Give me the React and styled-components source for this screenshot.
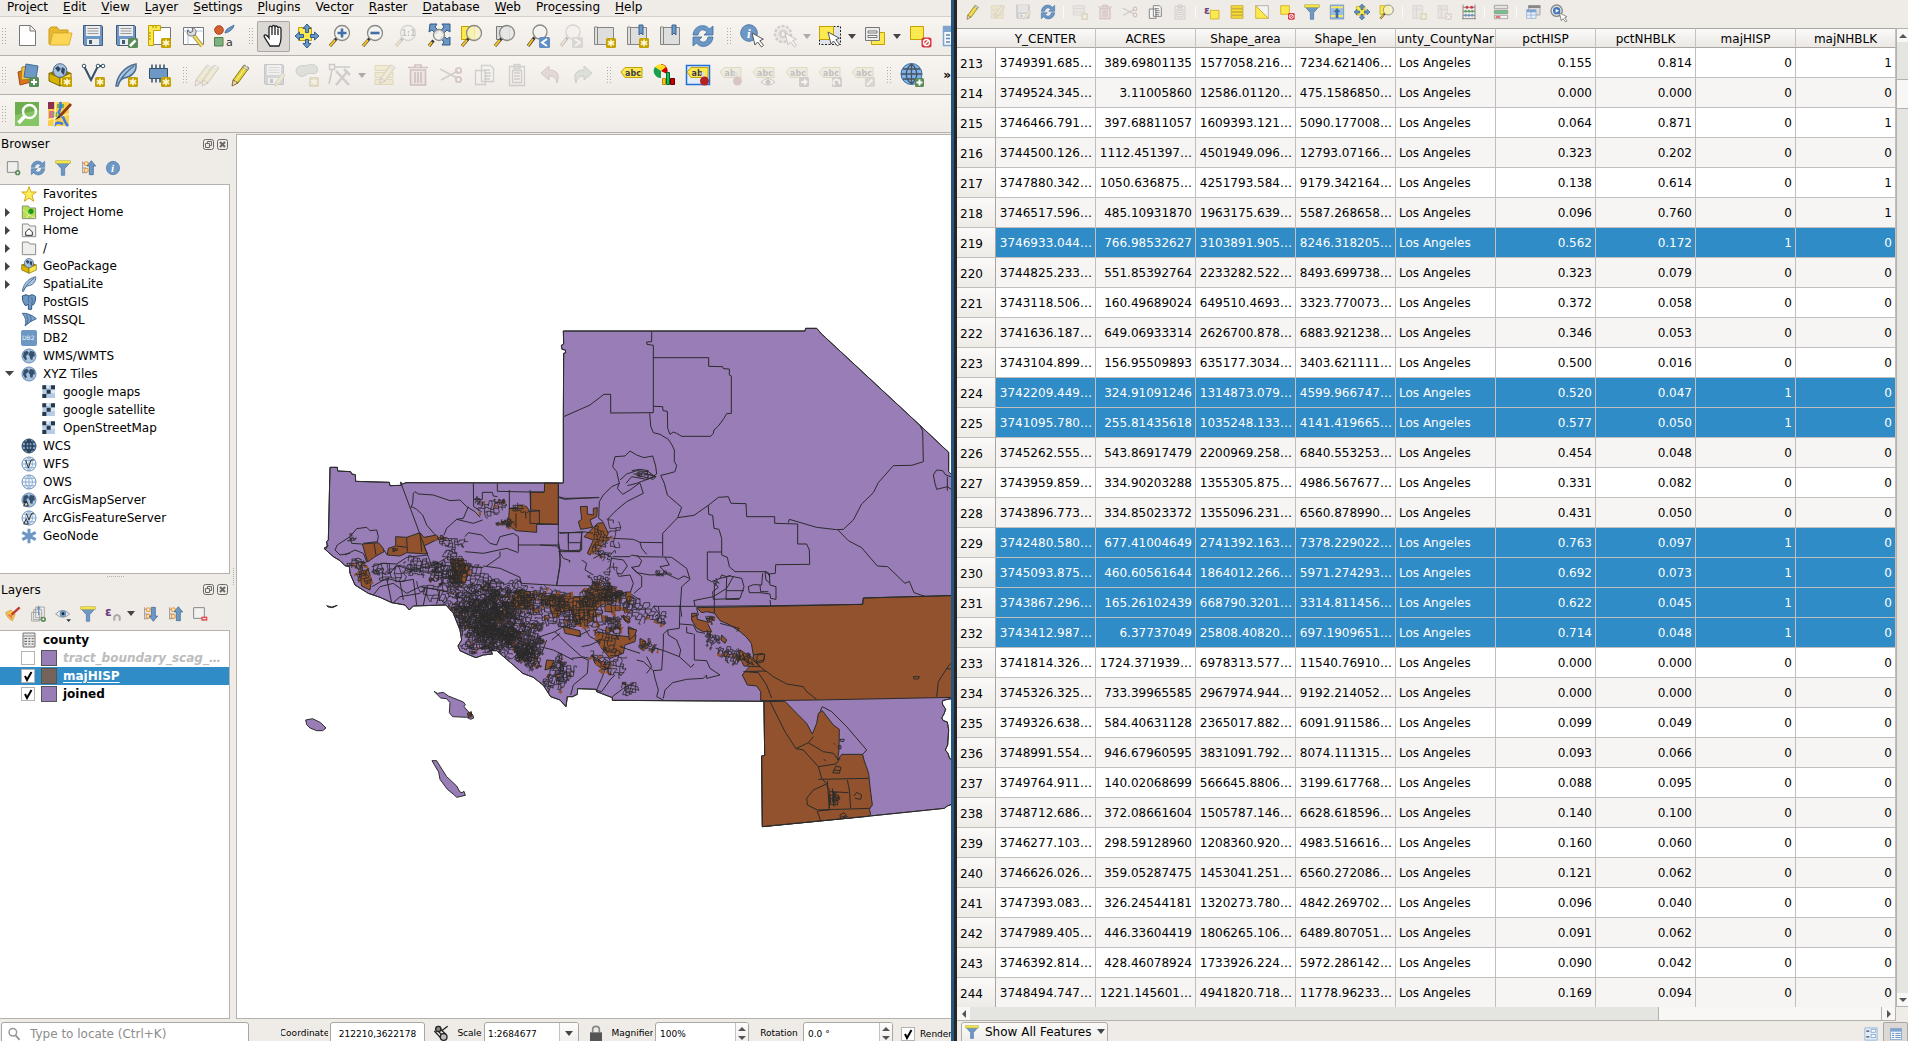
import React from "react";
import styled, { createGlobalStyle, css } from "styled-components";

/* ---------- theme values ---------- */
const c = {
  panel: "#efebe7",
  line: "#b5b2ae",
  grid: "#c0bfbd",
  select: "#308cc6",
  purple: "#987db7",
  brown: "#91522d",
  ink: "#2b2b2b",
  blue: "#6d97c4",
  blueDark: "#415a75",
  yellow: "#fce94f",
  gold: "#c4a000",
  green: "#5a8c5a",
  red: "#d9363e",
};

const Global = createGlobalStyle`
  *, *::before, *::after { box-sizing: border-box; }
  body { margin: 0; background: ${c.panel}; overflow: hidden; }
  body, button, input, select, table {
    font-family: "DejaVu Sans", Verdana, sans-serif;
    font-size: 12px;
    color: #000;
  }
  button { margin: 0; padding: 0; border: 0; background: none; }
`;

/* ---------- window frames ---------- */
const Desktop = styled.div`
  display: flex;
  height: 100vh;
  overflow: hidden;
`;
const MainWindow = styled.main`
  flex: 1 1 0;
  min-width: 0;
  display: flex;
  flex-direction: column;
  overflow: hidden;
  background: ${c.panel};
  border-right: 3px solid #27557c;
`;
const TableWindow = styled.section`
  flex: 1 1 0;
  min-width: 0;
  display: flex;
  flex-direction: column;
  overflow: hidden;
  background: ${c.panel};
  border-left: 3px solid #242628;
`;

/* ---------- menu and toolbars ---------- */
const MenuBar = styled.nav`
  flex: none;
  display: flex;
  gap: 1px;
  height: 17px;
  border-bottom: 1px solid #d3d0cc;
`;
const MenuItem = styled.button`
  height: 14px;
  padding: 0 7px;
  line-height: 14px;
  white-space: nowrap;
  u { text-underline-offset: 2px; }
`;
const Toolbar = styled.div`
  flex: none;
  display: flex;
  align-items: center;
  height: ${(p) => p.$height || 39}px;
  overflow: hidden;
  border-bottom: 1px solid ${c.line};
  background: linear-gradient(#f8f5f1, #efebe7);
`;
const Handle = styled.span`
  flex: none;
  width: 10px;
  height: 18px;
  margin-left: ${(p) => (p.$first ? 0 : 6)}px;
  background: radial-gradient(circle, #aeaba7 0 1px, transparent 1px) 1px 0 / 3px 3px repeat-y,
    radial-gradient(circle, #aeaba7 0 1px, transparent 1px) 4px 0 / 3px 3px repeat-y;
`;
const ToolButton = styled.button`
  flex: none;
  display: grid;
  place-items: center;
  width: 33px;
  height: 31px;
  border-radius: 2px;
  ${(p) => p.$pressed && css`
    background: #dcd8d5;
    box-shadow: inset 0 0 0 1px #aaa6a2;
  `}
  svg { overflow: visible; }
  &:disabled svg { opacity: 0.28; filter: grayscale(0.5); }
`;
const SmallButton = styled(ToolButton)`
  width: 25px;
  height: 24px;
`;
const ArrowButton = styled.button`
  flex: none;
  display: grid;
  place-items: center;
  width: 12px;
  height: 24px;
  &:disabled { opacity: 0.4; }
`;
const Overflow = styled.span`
  margin-left: auto;
  font-weight: bold;
`;
const Down = styled.i`
  border: 4px solid transparent;
  border-top: 5px solid #444;
  border-bottom: 0;
`;

/* ---------- docks ---------- */
const Body = styled.div`
  flex: 1;
  min-height: 0;
  display: flex;
`;
const Sidebar = styled.aside`
  flex: none;
  width: 230px;
  display: flex;
  flex-direction: column;
`;
const Dock = styled.section`
  flex: 1 1 0;
  min-height: 0;
  display: flex;
  flex-direction: column;
`;
const DockTitle = styled.header`
  flex: none;
  display: flex;
  align-items: center;
  gap: 3px;
  height: 22px;
  padding: 0 2px 0 1px;
  h2 { flex: 1; margin: 0; font-size: 12px; font-weight: normal; }
`;
const DockButton = styled.button`
  width: 11px;
  height: 11px;
  svg { display: block; }
`;
const DockTools = styled.div`
  flex: none;
  display: flex;
  height: 26px;
  margin-bottom: 3px;
  align-items: center;
`;
const Tree = styled.ul`
  flex: 1;
  min-height: 0;
  margin: 0;
  padding: 0;
  list-style: none;
  overflow: hidden;
  background: #fff;
  border: 1px solid ${c.line};
  border-left: 0;
`;
const TreeRow = styled.li`
  display: flex;
  align-items: center;
  gap: 6px;
  height: 18px;
  padding-left: ${(p) => (p.$child ? 41 : 5)}px;
  white-space: nowrap;
  ${(p) => p.$selected && css`background: ${c.select}; color: #fff;`}
  svg { display: block; }
`;
const Twist = styled.span`
  flex: none;
  width: 10px;
`;
const LayerName = styled.span`
  padding-top: 1px;
  font-weight: bold;
  ${(p) => p.$off && css`font-style: italic; color: #bcbcbc;`}
  ${(p) => p.$selected && css`text-decoration: underline; text-underline-offset: 2px;`}
`;
const NodeName = styled.span`
  padding-top: 0;
`;
const Swatch = styled.i`
  flex: none;
  width: 16px;
  height: 16px;
  background: ${(p) => p.$color};
  border: 1px solid #555;
`;
const Check = styled.input.attrs({ type: "checkbox" })`
  appearance: none;
  flex: none;
  width: 14px;
  height: 14px;
  margin: 0;
  background: #fff;
  border: 1px solid #b6b3ae;
  &:checked {
    background: #fff url("data:image/svg+xml;utf8,<svg xmlns='http://www.w3.org/2000/svg' viewBox='0 0 12 12'><path d='M3 6l2 4 4.500-8' fill='none' stroke='black' stroke-width='2'/></svg>");
  }
`;
const SplitH = styled.div`
  flex: none;
  height: 5px;
  display: grid;
  place-items: center;
  &::after { content: ""; width: 17px; border-top: 1px dotted #b5b2ae; }
`;
const SplitV = styled.div`
  flex: none;
  width: 6px;
  display: grid;
  place-items: center;
  &::after { content: ""; height: 17px; border-left: 1px dotted #b5b2ae; }
`;
const Canvas = styled.div`
  flex: 1;
  min-width: 0;
  margin-top: 1px;
  background: #fff;
  border: 1px solid ${c.line};
  border-right: 0;
  overflow: hidden;
  svg { display: block; width: 100%; height: 100%; }
`;

/* ---------- status bar ---------- */
const StatusBar = styled.footer`
  flex: none;
  display: flex;
  align-items: flex-start;
  height: 22px;
  padding: 3px 0 0 1px;
  overflow: hidden;
  white-space: nowrap;
`;
const Field = styled.div`
  flex: none;
  display: flex;
  align-items: center;
  width: ${(p) => p.$width}px;
  height: 23px;
  margin-right: ${(p) => p.$after || 0}px;
  background: #fff;
  border: 1px solid #aaa7a3;
  border-radius: 3px;
  overflow: hidden;
`;
const FieldInput = styled.input`
  flex: 1;
  min-width: 0;
  height: 20px;
  padding: 0 4px;
  border: 0;
  outline: 0;
  background: none;
  font-size: ${(p) => (p.$large ? 12 : 9)}px;
  text-align: ${(p) => (p.$center ? "center" : "left")};
  &::placeholder { color: #8c8c8c; opacity: 1; }
`;
const Picker = styled.select`
  flex: 1;
  min-width: 0;
  height: 20px;
  padding: 0 3px;
  border: 0;
  appearance: none;
  background: none;
  font-size: 9px;
`;
const FieldSide = styled.span`
  flex: none;
  display: flex;
  flex-direction: column;
  align-items: center;
  justify-content: center;
  gap: 5px;
  width: ${(p) => p.$width}px;
  height: 22px;
  border-left: 1px solid #c4c1bd;
  background: linear-gradient(#fdfdfc, #efedea);
`;
const SpinButton = styled.button`
  display: block;
  height: 4px;
  border: 4px solid transparent;
  ${(p) => (p.$up ? css`border-bottom-color: #555; border-top: 0;` : css`border-top-color: #555; border-bottom: 0;`)}
`;
const Caption = styled.label`
  flex: none;
  display: flex;
  justify-content: center;
  width: ${(p) => p.$width}px;
  margin-right: 2px;
  overflow: hidden;
  font-size: 9px;
  line-height: 22px;
`;
const StatusIcon = styled.button`
  flex: none;
  display: grid;
  place-items: center;
  width: ${(p) => p.$width}px;
  height: 21px;
`;
const RenderToggle = styled.span`
  flex: none;
  display: flex;
  align-items: center;
  gap: 5px;
  height: 23px;
  label { font-size: 9px; }
`;

/* ---------- attribute table ---------- */
const TableTools = styled.div`
  flex: none;
  display: flex;
  align-items: center;
  height: 28px;
  padding: 0 0 4px 3px;
`;
const Divider = styled.i`
  flex: none;
  width: 1px;
  height: 12px;
  margin: 0 3px;
  background: #fbfaf9;
`;
const TableArea = styled.div`
  flex: 1;
  min-height: 0;
  display: flex;
`;
const TableScroll = styled.div`
  flex: 1;
  min-width: 0;
  display: flex;
  flex-direction: column;
`;
const TableClip = styled.div`
  flex: 1;
  min-height: 0;
  overflow: hidden;
`;
const Grid = styled.table`
  width: 100%;
  table-layout: fixed;
  border-collapse: separate;
  border-spacing: 0;
`;
const HeadCell = styled.th`
  width: ${(p) => (p.$corner ? "39px" : "auto")};
  height: 20px;
  padding: 2px 1px 0;
  border: solid #a9a6a2;
  border-width: 1px 0;
  border-right: ${(p) => (p.$corner ? "0" : "1px solid #c6c3bf")};
  background: linear-gradient(#fbfaf9, #ebe8e4);
  font-weight: normal;
  line-height: 16px;
  white-space: nowrap;
`;
const RowHead = styled.th`
  height: 30px;
  padding: 2px 3px 0;
  border-right: 1px solid #a9a6a2;
  border-bottom: 1px solid ${c.grid};
  background: linear-gradient(#fbfaf9, #eeebe7);
  font-weight: normal;
  text-align: left;
`;
const Cell = styled.td`
  height: 30px;
  padding: 0 3px;
  border-right: 1px solid ${c.grid};
  border-bottom: 1px solid ${c.grid};
  text-align: ${(p) => (p.$text ? "left" : "right")};
  white-space: nowrap;
  overflow: hidden;
`;
const Row = styled.tr`
  td { background: ${(p) => (p.$selected ? c.select : p.$alt ? "#f6f5f4" : "#fff")}; }
  ${(p) => p.$selected && css`td { color: #fff; }`}
`;
const VBar = styled.div`
  flex: none;
  width: 12px;
  display: flex;
  flex-direction: column;
  margin-bottom: 14px;
  border: 1px solid ${c.line};
  border-right: 0;
  background: #e4e4e0;
`;
const HBar = styled.div`
  flex: none;
  display: flex;
  height: 14px;
  border-bottom: 1px solid ${c.line};
  border-right: 1px solid ${c.line};
  background: #e4e4e0;
`;
const BarButton = styled.button`
  flex: none;
  display: grid;
  place-items: center;
  width: ${(p) => (p.$wide ? "100%" : "13px")};
  height: 13px;
  background: #f8f7f6;
`;
const Gap = styled.i`
  flex: ${(p) => p.$share} 1 0;
`;
const Thumb = styled.i`
  flex: ${(p) => p.$share} 1 0;
  border: solid ${c.line};
  border-width: ${(p) => (p.$across ? "0 1px" : "1px 0")};
  background: #f8f7f6;
`;
const TableFoot = styled.footer`
  flex: none;
  display: flex;
  justify-content: space-between;
  height: 20px;
  padding: 1px 0 0 4px;
  overflow: hidden;
`;
const FilterButton = styled.button`
  display: flex;
  align-items: center;
  gap: 6px;
  height: 22px;
  padding: 0 2px 3px 3px;
  border: 1px solid #b0ada9;
  border-radius: 3px;
  background: linear-gradient(#fbfaf9, #efedea);
`;
const FootViews = styled.div`
  display: flex;
`;

/* ---------- icons ---------- */
const Badge = ({ x = 14, y = 14, s = 10, fill = c.gold, children }) => (
  <g>
    <rect x={x} y={y} width={s} height={s} rx="1.500" fill={fill} />
    {children || (
      <path
        d={`M${x + s / 2} ${y + 1.5}v${s - 3}M${x + 1.8} ${y + 3.2}l${s - 3.6} ${s - 6.4}M${x + 1.8} ${y + s - 3.2}l${s - 3.6} ${6.4 - s}`}
        stroke="#fff8d0" strokeWidth="1.600"
      />
    )}
  </g>
);
const Lens = ({ cx = 14, cy = 9, r = 7.5, fill = "#f3f3ee" }) => (
  <g>
    <path d={`M${cx - 5.5} ${cy + 5.5}L2 22`} stroke="#333" strokeWidth="3" />
    <path d={`M${cx - 7} ${cy + 7}L2 22`} stroke="#f5c328" strokeWidth="2" />
    <circle cx={cx} cy={cy} r={r} fill={fill} fillOpacity=".85" stroke="#8a8a86" strokeWidth="1.300" />
  </g>
);
const Pointer = ({ x = 12, y = 9 }) => (
  <path transform={`translate(${x} ${y})`} d="M0 0l3 12 2.500-3 4 5 2-1.700-3.700-4.600 3.500-1.500z" fill="#fff" stroke="#555" />
);
const Disk = () => (
  <g>
    <path d="M2.500 1.500h18l1 1v19h-18l-1-1z" fill={c.blue} stroke={c.blueDark} />
    <path d="M5 2h14v10H5z" fill="#eee" />
    <path d="M6.500 4.500h11M6.500 7h11M6.500 9.500h11" stroke="#999" />
    <path d="M6 15h12v6H6z" fill="#ececec" />
    <path d="M8 16h3v4H8z" fill={c.blueDark} />
  </g>
);
const Pencil = ({ t }) => (
  <g transform={t}>
    <path d="M4 17L15 2l5 3L9 20z" fill="#e5d23a" stroke="#8a7a20" />
    <path d="M15 2l5 3-1.500 2.200-5-3z" fill="#d0d0cc" stroke="#777" strokeWidth=".7" />
    <path d="M4 17l5 3-6 3z" fill="#eed8a8" stroke="#66511c" strokeWidth=".8" />
    <path d="M6.500 18.500L17.500 3.500" stroke="#fff5a0" />
  </g>
);
const Globe = ({ dark, grid }) => (
  <g>
    <circle cx="12" cy="12" r="10.500" fill={grid ? (dark ? "#7ba2cd" : "#f2f6fa") : "#a9c3df"} stroke={dark ? "#36506c" : "#6a8cb0"} strokeWidth="1.500" />
    {grid ? (
      <path d="M12 2v20M2 12h20M4 6.500h16M4 17.500h16M12 2c-7 6-7 14 0 20M12 2c7 6 7 14 0 20" fill="none" stroke={dark ? "#2f4358" : "#85abd4"} strokeWidth={dark ? 2.2 : 1.4} />
    ) : (
      <path d="M4 6l5-2 3 3-3 4-2 1 2 4-2 3-4-6zM14 4l6 2 1 6-3 1-1 5-3-1-1-5-2-2z" fill="#34516f" />
    )}
  </g>
);
const Box = () => (
  <g>
    <path d="M1 10l11 5v8L1 18z" fill="#d7b300" stroke="#7d6600" />
    <path d="M23 10l-11 5v8l11-5z" fill="#fbe54b" stroke="#7d6600" />
    <path d="M1 10l11-5 11 5-11 5z" fill="#8d7400" />
    <circle cx="12" cy="7.500" r="6.800" fill="#a9c3df" stroke="#4d6c8d" />
    <path d="M7 5l3-2 3 3-3 3zM14 4l3 2-1 6-3-3z" fill="#2e4864" />
  </g>
);
const Feather = () => (
  <path d="M2 23C3 14 9 4 22 1c1 8-5 13-12 14-3 1-5 4-6 8zM4 21C8 14 13 8 20 3" fill="#a9c6e3" stroke="#4d6f92" strokeWidth="1.500" />
);
const Tag = ({ children, pale, short }) => (
  <g>
    <path d="M1 9L5 4.500h17v10H5z" fill={pale ? "#e0dca8" : "#fce94f"} stroke={c.gold} />
    <text x={short ? 5.5 : 5} y="12.500" fontSize="8" fontWeight="bold" fill="#3c3c50">{short ? "ab" : "abc"}</text>
    {children}
  </g>
);
const Sheet = () => <path d="M3.500 3.500h20v17h-20z" fill="#fff" stroke="#777" />;
const Bars = ({ n = 4 }) => (
  <path d={n === 4 ? "M3 2.500h18v4H3zM3 7.500h18v4H3zM3 12.500h18v4H3zM3 17.500h18v4H3z" : "M2 2.500h18v5H2zM2 9.500h18v5H2zM2 16.500h18v5H2z"} fill="#f6dd3c" stroke="#bd9a10" />
);
const Funnel = () => (
  <g>
    <path d="M1.500 4h21l-8 9v10h-5V13z" fill={c.blue} stroke="#4a76a8" />
    <path d="M1 1h22v4H1z" fill="#fce94f" stroke="#b5b040" />
  </g>
);
const Tiles = () => (
  <g>
    <path d="M2 2h19v19H2z" fill="#b5cce4" />
    <path d="M2 2h6v6H2zM15 2h6v6h-6zM8.500 8.500h6v6h-6zM2 15h6v6H2z" fill="#27394d" />
    <path d="M8 2h4v4H8zM15 9h6v5h-6z" fill="#dbe7f3" />
  </g>
);
const Book = () => (
  <path d="M2.500 3h3v17.500h-3zM5.500 3.500h16v17h-16z" fill="#dedede" stroke="#858582" />
);
const Ribbon = () => <path d="M14 1h4v10l-2-2-2 2z" fill={c.blue} stroke="#36648f" />;
const Folder = ({ fill = "#efefed", children }) => (
  <g>
    <path d="M2 3h9l2 3h9v16H2z" fill={fill} stroke="#8c8c88" strokeWidth="1.500" />
    {children}
  </g>
);
const TreeArrow = ({ up }) => (
  <g>
    <path d="M4 2v18M4 5h6M4 12h6M4 19h6" fill="none" stroke="#999" strokeWidth="1.500" />
    <path d="M7 3h5v5H7zM7 13h5v5H7z" fill="#fff2d8" stroke="#f0932c" strokeWidth="1.500" />
    <path transform={up ? "" : "matrix(1 0 0 -1 0 24)"} d="M17 1l6.500 8H20v13h-6V9h-3.500z" fill={c.blue} stroke="#345f8c" />
  </g>
);
const Trash = () => (
  <g fill="none" stroke="#a33b3b" strokeWidth="1.600">
    <path d="M4.500 7h15v15h-15z" fill="#edc6c6" />
    <path d="M9 9v11M12 9v11M15 9v11M2 4.500h20M9 4V2h6v2" />
  </g>
);
const Scissors = () => (
  <g fill="none" stroke="#777" strokeWidth="1.800">
    <path d="M1 6l17 9M2 17l17-9" />
    <circle cx="19.500" cy="16.500" r="2.700" stroke="#a55" />
    <circle cx="19.500" cy="7.500" r="2.700" stroke="#a55" />
  </g>
);
const Copy = () => (
  <path d="M3.500 7.500h10v14h-10zM9.500 2.500h9l3 3v13h-12zM12 7h6M12 10h7M12 13h7M12 16h6" fill="#f6f6f6" stroke="#777" strokeWidth="1.300" />
);
const Paste = () => (
  <path d="M4.500 3.500h15v19h-15zM9 1.500h6v4H9zM7.500 7.500h9v12h-9zM9 10h6M9 13h6M9 16h6" fill="#eee" stroke="#777" strokeWidth="1.300" />
);
const Cycle = () => (
  <g fill={c.blue} stroke="#3b6ea5" strokeWidth=".8">
    <path d="M2 11C3 1 14-1 18.500 5L22 2v9h-9l3-3C12 4 8 6 7 11z" />
    <path d="M22 13c-1 10-12 12-16.500 6L2 22v-9h9l-3 3c4 4 8 2 9-3z" />
  </g>
);
const NoEntry = ({ x = 18.5, y = 18.5 }) => (
  <g>
    <rect x={x - 5} y={y - 5} width="10" height="10" rx="2" fill={c.red} />
    <circle cx={x} cy={y} r="3" fill="none" stroke="#fff" strokeWidth="1.400" />
    <path d={`M${x - 2} ${y + 2}l4-4`} stroke="#fff" strokeWidth="1.400" />
  </g>
);
const Arrows4 = () => (
  <path d="M12 0l4 4.500h-2.500v4h-3v-4H8zM12 24l4-4.500h-2.500v-4h-3v4H8zM0 12l4.500-4v2.500h4v3h-4V16zM24 12l-4.500-4v2.500h-4v3h4V16z" fill={c.blue} stroke="#2f5b88" />
);
const Stack = () => (
  <g>
    <path d="M8.500 1.500h13v16h-13zM5.500 5.500h12v15h-12zM2.500 9.500h12v13h-12z" fill="#eeeeea" fillOpacity=".7" stroke="#888" />
    <path d="M13 2v12M11 4l2-3 2 3" stroke={c.blue} strokeWidth="2" fill="none" />
  </g>
);
const Form = () => (
  <g>
    <path d="M8.500 8.500h13v12h-13z" fill={c.yellow} stroke={c.gold} />
    <path d="M2.500 3.500h14v13h-14z" fill="#ececec" stroke="#777" />
    <path d="M5 7h9v2H5zM5 11.500h9v2H5z" fill="#fff" stroke="#777" />
  </g>
);
const TableGlyph = () => (
  <g>
    <path d="M2.500 2.500h19v19h-19z" fill="#f4f8fc" stroke="#7fa5cf" strokeWidth="1.500" />
    <path d="M3 3h18v5H3z" fill="#7fa5cf" />
    <path d="M5 11h4M11 11h9M5 14.500h4M11 14.500h9M5 18h4M11 18h9" stroke="#5b86b5" strokeWidth="1.500" />
  </g>
);

const icons = {
  new: <path d="M4.500 1.500h11l5 5v15h-16zM15 2v5h5" fill="#fff" stroke="#777" />,
  open: <g><path d="M1 5l2-2h6l2 3h9v3H5L3 20H1z" fill="#e8b830" stroke="#c99b1c" /><path d="M5 9h19l-3 12H2z" fill="#fcd757" stroke="#e0b030" /></g>,
  save: <Disk />,
  saveas: <g><Disk /><Badge fill={c.green}><path d="M16 22l5.500-5.500" stroke="#fff" strokeWidth="2.500" /></Badge></g>,
  layout: <g><Sheet /><path d="M1.500 1.500h12v5h-7v15h-5z" fill={c.yellow} stroke={c.gold} /><path d="M6 2v2M9 2v2M2 9h2M2 12h2M2 15h2" stroke="#a58a00" /><Badge /></g>,
  manager: <g><Sheet /><path d="M3.500 7h19M8 3.500v17" stroke="#a8c0e8" /><path d="M14 12l8 10" stroke="#b49a3a" strokeWidth="4" /><path d="M14 12l8 10" stroke="#f5e27a" strokeWidth="2" /><path d="M8 6l2 3 3-2-1-3c4 0 5 4 3 7-3 2-7 1-8-2z" fill="#ddd" stroke="#666" /></g>,
  style: <g><circle cx="6" cy="6" r="4.300" fill="#d5602f" stroke="#a8441c" /><path d="M12 9c1-5 5-5 9-8-1 5-5 7-9 8z" fill={c.blue} stroke="#476f9c" /><path d="M1.500 13.500h8.500v8.500H1.500z" fill="#7fb07f" stroke="#4d804d" /><text x="13" y="21.500" fontSize="11" fill="#333">a</text></g>,
  hand: <path d="M8 22C6 18 3 15 2 12c1-2 3-1 5 2V4c0-2.500 3-2.500 3 0 0-3.500 3-3.500 3 0 0-3 3-2.500 3 .500 0-2 3-2 3 .5v9c0 4-1 6-2 8zM10 4v7M13 4v7M16 5v6" fill="#fff" stroke="#222" strokeWidth="1.300" />,
  panSel: <g><path d="M3.500 3.500h13v13h-13z" fill={c.yellow} stroke={c.gold} /><Arrows4 /></g>,
  zoomIn: <g><Lens /><path d="M14 4.500v9M9.500 9h9" stroke="#3f6fa6" strokeWidth="2.600" /></g>,
  zoomOut: <g><Lens /><path d="M9.500 9h9" stroke="#3f6fa6" strokeWidth="2.600" /></g>,
  native: <g><Lens /><text x="7.500" y="12" fontSize="8" fontWeight="bold" fill="#555">1:1</text></g>,
  zoomFull: <g><path d="M3 0h7L8 3l4 4-3 3-4-4-3 2zM23 0v8l-3-2-4 4-3-3 4-4-2-3zM23 21h-8l2-3-4-4 3-3 4 4 3-2z" fill={c.blue} stroke="#2f5b88" /><Lens cx={12} cy={11} r={5.5} /></g>,
  zoomSel: <g><path d="M1.500 2.500h13v13h-13z" fill={c.yellow} stroke={c.gold} /><Lens fill="#f6f2c6" /></g>,
  zoomLayer: <g><path d="M3.500 2.500h13v13h-13z" fill="#ddd" stroke="#777" /><Lens fill="#e8e8e6" /></g>,
  zoomLast: <g><Lens cx={14} cy={8} r={7} /><Badge x={13} y={13} s={11} fill="#5f8fc4"><path d="M21 15l-5 3.500 5 3.500" fill="none" stroke="#fff" strokeWidth="2" /></Badge></g>,
  zoomNext: <g><Lens cx={14} cy={8} r={7} /><Badge x={13} y={13} s={11} fill="#999"><path d="M16 15l5 3.500-5 3.500" fill="none" stroke="#fff" strokeWidth="2" /></Badge></g>,
  view: <g><Book /><Badge /></g>,
  bookmarkNew: <g><Book /><Ribbon /><Badge /></g>,
  bookmark: <g><Book /><Ribbon /></g>,
  refresh: <Cycle />,
  identify: <g><circle cx="9" cy="9" r="8.300" fill={c.blue} stroke="#4c7aab" /><text x="7" y="14" fontSize="13" fontStyle="italic" fontFamily="Liberation Serif" fontWeight="bold" fill="#fff">i</text><Pointer /></g>,
  action: <g><circle cx="10" cy="10" r="8" fill="#ddd" stroke="#777" strokeWidth="2.500" strokeDasharray="3 1.500" /><circle cx="10" cy="10" r="4.500" fill="#8a8a8a" /><path d="M9 7.500l4 2.500-4 2.500z" fill="#fff" /><Pointer /></g>,
  select: <g><path d="M1.500 2.500h21v18h-21z" fill="#dfe3ea" stroke="#222" strokeDasharray="2 1.500" /><path d="M1.500 2.500h14v13h-14z" fill={c.yellow} stroke={c.gold} /><Pointer x={10} y={8} /></g>,
  form: <Form />,
  deselect: <g><path d="M2.500 2.500h13v13h-13z" fill={c.yellow} stroke={c.gold} /><NoEntry /></g>,
  table: <TableGlyph />,
  dsm: <g><path d="M3 9l10-3 3 13-11 3z" fill="#e0721f" stroke="#a04a10" /><path d="M7 4l10-1 1 13-12 1z" fill="#f0c43c" stroke="#a68116" /><path d="M11 1l12 2-2 13-12-2z" fill={c.blue} stroke="#426b98" /><Badge fill={c.green}><path d="M19 16v6M16 19h6" stroke="#fff" strokeWidth="2" /></Badge></g>,
  gpkg: <g><Box /><Badge /></g>,
  gpkgPlain: <Box />,
  shp: <g><path d="M3 3l7 14L17 3h5" fill="none" stroke="#35506b" strokeWidth="2" /><g fill="#fff" stroke="#35506b"><circle cx="3" cy="3" r="1.800" /><circle cx="17" cy="3" r="1.800" /><circle cx="22" cy="3" r="1.800" /></g><Badge /></g>,
  feather: <g><Feather /><Badge /></g>,
  featherPlain: <Feather />,
  memory: <g><path d="M5 1.500v18M9 1.500v18M13 1.500v18M17 1.500v18" stroke="#35506b" strokeWidth="1.500" /><path d="M2.500 5.500h18v10h-18z" fill={c.blue} stroke="#35506b" /><Badge /></g>,
  edits: <g><Pencil t="translate(-4 0)" /><Pencil t="translate(3 0)" /></g>,
  pencil: <Pencil />,
  saveEdits: <g><Disk /><Pencil t="translate(11 9) scale(.62)" /></g>,
  addFeature: <g><path d="M1 8C2 0 9 4 13 2c7-2 11 2 9 7-3 4-7-1-11 3-5 3-9 1-10-4z" fill="#9fb89f" stroke="#667" /><Badge /></g>,
  vertex: <g><path d="M1.500 1.500h5v5h-5zM7 4h15M4 7L1 21" fill="none" stroke="#666" strokeWidth="1.500" /><path d="M8 8l13 14M8 22L19 9M16 6l6 6" stroke="#777" strokeWidth="2.500" /></g>,
  modify: <g><Bars n={3} /><Pencil t="translate(4 0) scale(.9)" /></g>,
  trash: <Trash />, cut: <Scissors />, copy: <Copy />, paste: <Paste />,
  undo: <path d="M3 10l8-7v4c8 0 11 4 8 13-1-5-3-7-8-7v4z" fill="#c99" stroke="#955" />,
  redo: <path d="M21 10l-8-7v4C5 7 2 11 5 20c1-5 3-7 8-7v4z" fill="#9b9" stroke="#575" />,
  tag: <Tag />,
  diagram: <g><path d="M8 8V1a7 7 0 0 1 6 10z" fill="#c00" /><path d="M8 8L2 4a7 7 0 0 1 11 0z" fill="#fce020" /><path d="M8 8l-6-4a7 7 0 0 0 6 11z" fill="#18a04a" /><path d="M9.500 15.500h3v6h-3z" fill="#fcc020" stroke="#b80" /><path d="M13.500 9.500h3v12h-3z" fill="#18c050" stroke="#063" /><path d="M17.500 15.500h4v6h-4z" fill="#c00" stroke="#600" /></g>,
  pinOn: <g><path d="M.5 2.500h23v19H.5z" fill="#e4ecf6" stroke="#1e6fd8" strokeWidth="1.500" /><Tag short /><path d="M17 9v8" stroke="#ddd" strokeWidth="3" /><circle cx="18.500" cy="18" r="4.500" fill="#b22222" /></g>,
  pin: <Tag pale short><path d="M17 9v8" stroke="#bbb" strokeWidth="3" /><circle cx="18.500" cy="18" r="4.500" fill="#b55" /></Tag>,
  tagEye: <Tag pale><path d="M9 19q7-7 14 0-7 6-14 0z" fill="#fff" stroke="#555" /><circle cx="16" cy="19" r="2.500" fill="#666" /></Tag>,
  tagMove: <Tag pale><Badge fill="#777"><path d="M16 19h5M19 16.500l2.500 2.500-2.500 2.500" fill="none" stroke="#fff" strokeWidth="2" /></Badge></Tag>,
  tagTurn: <Tag pale><Badge fill="#777"><path d="M17 22a3 3 0 1 1 4-1" fill="none" stroke="#fff" strokeWidth="2" /></Badge></Tag>,
  tagEdit: <Tag pale><Badge fill="#998"><path d="M16 22l5.500-5.500" stroke="#fff" strokeWidth="2" /></Badge></Tag>,
  globeAdd: <g><circle cx="11.500" cy="11" r="10.500" fill="#7fb2ea" stroke="#3f6ba0" /><path d="M11.500 1v20M1 11h21M3 6h17M3 16h17M11.500 1c-7 6-7 14 0 20M11.500 1c7 6 7 14 0 20" fill="none" stroke="#46525e" strokeWidth="1.300" /><Badge x={15} y={15} s={9} fill={c.green}><path d="M19.500 16.500v6M16.500 19.500h6" stroke="#fff" strokeWidth="2" /></Badge></g>,
  search: <g><path d="M0 0h24v24H0z" fill="#6fae4e" /><path d="M0 13L24 8v16H0z" fill="#86c566" /><circle cx="14.500" cy="9.500" r="6.500" fill="none" stroke="#fff" strokeWidth="2.500" /><path d="M9.500 14.500L3.500 21" stroke="#fff" strokeWidth="3.500" /></g>,
  osm: <g><path d="M0 0h21v24H0z" fill="#f9cf4a" /><path d="M0 0h6v7H0z" fill="#8c2f50" /><path d="M1 9h5v7H1z" fill="#d9738e" /><path d="M9 2h7v4H9zM5 10h4v5H5z" fill="#6cae5c" /><path d="M12 0c4 8-6 10 2 14 3 3 2 6 6 10M6 24c2-4 4-4 9-2" stroke="#3f7be0" strokeWidth="2.500" fill="none" /><path d="M0 18l21-6M8 0L6 24" stroke="#fff5c0" strokeWidth="1.300" /><path d="M11 13L22 1l2 2-11 12z" fill="#8a3c12" /><path d="M7 18l4-5 2 2z" fill="#333" /></g>,
  addLayer: <g><path d="M3.500 2.500h16v16h-16z" fill="#eef0ee" stroke="#888" strokeWidth="1.500" /><circle cx="19" cy="19" r="4" fill={c.green} /><circle cx="19" cy="19" r="1.500" fill="#fff" /></g>,
  remove: <g><path d="M2.500 2.500h16v16h-16z" fill="#f4f2f0" stroke="#888" strokeWidth="1.500" /><path d="M14 16h9v6h-9z" fill="#e5484d" /><path d="M16 19h5" stroke="#fff" strokeWidth="1.500" /></g>,
  filter: <Funnel />,
  treeUp: <TreeArrow up />, treeDown: <TreeArrow />,
  info: <g><circle cx="12" cy="12" r="10" fill={c.blue} stroke="#4c7aab" /><text x="9" y="18" fontSize="17" fontStyle="italic" fontFamily="Liberation Serif" fontWeight="bold" fill="#fff">i</text></g>,
  star: <path d="M12 1l3 8h8l-6.500 5L19 23l-7-5-7 5 2.500-9L1 9h8z" fill="#fcee58" stroke="#d8a520" strokeWidth="1.500" />,
  projHome: <Folder fill="#b5e04c"><path d="M3 9l9 7 9 5M8 21l7-9" stroke="#eaffb8" strokeWidth="1.500" /><circle cx="15" cy="11" r="4" fill="#1a9a1a" /></Folder>,
  home: <Folder><path d="M7 15l5-5 5 5v5H7z" fill="#fff" stroke="#333" strokeWidth="1.500" /></Folder>,
  folder: <Folder />,
  postgis: <g><path d="M2 3q6-4 10 0 6-4 10 1 1 6-3 12l-3 1v6h-5v-8q-2 3-5 2Q1 10 2 3z" fill={c.blue} stroke="#35597f" strokeWidth="1.500" /><path d="M12 3q-2 6 0 10M16 5q2 5 0 11" fill="none" stroke="#35597f" /></g>,
  mssql: <path d="M2 2q10-1 21 8-8 3-17 11 4-9-4-19zM8 4q5 8 1 14M13 5q4 5 1 10" fill="#7fa5cf" stroke="#3f6890" strokeWidth="1.500" />,
  db2: <g><rect x="0" y="0" width="24" height="24" rx="3" fill={c.blue} /><text x="1.500" y="15" fontSize="9" fill="#eef4fa">DB2</text></g>,
  wms: <Globe />, wcs: <Globe grid dark />, ows: <Globe grid />,
  wfs: <g><Globe grid /><path d="M7 6l4 12 4-12h4" fill="none" stroke="#333" strokeWidth="1.500" /></g>,
  arcMap: <g><Globe /><path d="M4 21l4-8 3 8zM3 15l6 1" stroke="#222" fill="#ddd" strokeWidth="1.500" /></g>,
  arcFeat: <g><Globe grid /><path d="M8 5l4 10 4-10h3M4 21l4-8 3 8z" stroke="#333" fill="none" strokeWidth="1.500" /></g>,
  geonode: <path d="M12 1v22M2 6.500l20 11M2 17.500l20-11" stroke={c.blue} strokeWidth="4.500" />,
  tiles: <Tiles />,
  brush: <g><path d="M1 10l8-4 6 7-4 9c-5-2-8-6-10-12z" fill="#f3c64a" stroke="#c98f2a" /><path d="M3 12l8 2-1 5z" fill="#f07060" /><path d="M10 13L22 2" stroke="#c0392b" strokeWidth="3.500" /></g>,
  group: <g><Stack /><circle cx="20" cy="20" r="4" fill={c.green} /><circle cx="20" cy="20" r="1.500" fill="#fff" /></g>,
  eye: <g><path d="M1 12q10-11 21 0-10 10-21 0z" fill="#eee" stroke="#999" strokeWidth="1.500" /><circle cx="12" cy="11.500" r="5" fill={c.blue} /><circle cx="12" cy="11.500" r="2" fill="#222" /><path d="M17 20h7l-3.500 4z" fill="#333" /></g>,
  epsilon: <g><text x="0" y="15" fontSize="18" fontWeight="bold" fill="#6e3c78">ε</text><path d="M14 22v-6q4-5 8 0v6" fill="none" stroke="#aaa" strokeWidth="3" /></g>,
  sheet: <g><path d="M3 1.500h18v21H3z" fill="#e8e8e6" stroke="#777" strokeWidth="1.500" /><path d="M3 6h18" stroke="#888" strokeWidth="1.500" /><path d="M5 10h4M11 10h3M16 10h3M5 14h4M11 14h3M16 14h3M5 18h4M11 18h3M16 18h3" stroke="#555" strokeWidth="1.500" /></g>,
  selExpr: <g><path d="M9.500 9.500h13v13h-13z" fill={c.yellow} stroke={c.gold} /><text x="0" y="15" fontSize="16" fontWeight="bold" fill="#6e3c78">ε</text></g>,
  selAll: <Bars />,
  invert: <g><path d="M2.500 2.500h19v19z" fill="#f2f2f0" stroke="#999" /><path d="M2.500 2.500v19h19z" fill={c.yellow} stroke={c.gold} /></g>,
  moveTop: <g><path d="M2 1.500h20v21H2z" fill="#9cbce0" stroke="#5b86b5" /><path d="M3 5h18M3 18h18" stroke="#f8e860" strokeWidth="3" /><path d="M12 6l5 6h-3v9h-4v-9H7z" fill="#3d6da3" /></g>,
  addRow: <g><path d="M2 2.500h17v14H2zM2 7h17M2 12h17" fill="#ddd" stroke="#888" /><Badge /></g>,
  newField: <g><path d="M3 2.500h14v19H3zM8 2.500v19M3 8h14" fill="#ddd" stroke="#888" /><Badge /></g>,
  delField: <g><path d="M3 2.500h14v19H3zM8 2.500v19M3 8h14" fill="#ecc" stroke="#888" /><Badge fill="#c88" ><path d="M16 16l6 6M22 16l-6 6" stroke="#fff" strokeWidth="2" /></Badge></g>,
  calc: <g><path d="M3 1v22M21 1v22M2 22h20M3 5h18M3 11h18M3 17h18" stroke="#888" strokeWidth="1.500" /><g fill={c.red}><circle cx="9" cy="5" r="2.300" /><circle cx="16" cy="5" r="2.300" /></g><g fill="#5aa86a"><circle cx="7" cy="11" r="2" /><circle cx="12" cy="11" r="2" /><circle cx="17" cy="11" r="2" /></g><g fill={c.blue}><circle cx="7" cy="17" r="2" /><circle cx="12" cy="17" r="2" /><circle cx="17" cy="17" r="2" /></g></g>,
  cond: <g stroke="#888"><path d="M2 2h20v5H2z" fill="#e4e4e2" /><path d="M2 9.500h20v5H2z" fill="#6fc28a" /><path d="M2 17h20v5H2z" fill="#f4f4f4" /><path d="M4 19.500h7" stroke={c.red} strokeWidth="2" /></g>,
  dock: <g><path d="M5.500 2.500h17v14h-17z" fill="#ddd" stroke="#888" /><path d="M5 2h18v4H5z" fill="#888" /><path d="M2.500 8.500h14v13h-14z" fill="#e9f1f9" stroke="#7fa5cf" /><path d="M3 9h13v3H3zM9 12v9M3 16.500h13" fill="#7fa5cf" stroke="#7fa5cf" /></g>,
  tableAct: <g><circle cx="10" cy="10" r="8.500" fill="#e4e4e4" stroke="#888" strokeWidth="2" /><circle cx="10" cy="10" r="5.500" fill="#3f78b8" /><path d="M8.500 7l5 3-5 3z" fill="#fff" /><Pointer x={14} y={13} /></g>,
  formView: <g><path d="M1.500 1.500h21v21h-21z" fill="#e3edf7" stroke="#8fb2da" strokeWidth="1.500" /><path d="M4 7h5M4 17h5" stroke="#445" strokeWidth="2" /><path d="M12 4h8v5h-8zM12 13h8v5h-8z" fill="#fff" stroke="#7fa5cf" strokeWidth="1.500" /></g>,
  extents: <g fill="none" stroke="#222" strokeWidth="2"><path d="M4 5l12 13M7 2l12 12M2 9l12 13M14 8l8-6" /><circle cx="16" cy="18" r="5" fill="#bbb" /><circle cx="8" cy="6" r="4" fill="#888" /></g>,
  lock: <g><path d="M7 11V7q0-5 5-5t5 5v4" fill="none" stroke="#888" strokeWidth="2.500" /><path d="M3 11h18v13H3z" fill="#555" /></g>,
  find: <g fill="none" stroke="#999" strokeWidth="2.500"><circle cx="10" cy="9" r="6.500" /><path d="M14.500 14l7 8" strokeWidth="3.500" /></g>,
};
const Icon = ({ name, size = 24 }) => (
  <svg width={size} height={size} viewBox="0 0 24 24" fontFamily="DejaVu Sans" aria-hidden="true">
    {icons[name]}
  </svg>
);

/* ---------- map ---------- */
const shift = (text, dx, dy) =>
  text.trim().split(/\s+/).map((p) => {
    const [x, y] = p.split(",").map(Number);
    return `${x + dx},${y + dy}`;
  }).join(" ");
const west = (t) => shift(t, 0, 0);
const north = (t) => shift(t, 720, -360);
const east = (t) => shift(t, 720, 360);

const land =
  west("85,300 90,82 112,82 113,93 152,95 155,102 166,104 167,124 268,127 270,137 304,136 302,127 308,132 318,128 788,129") + " " +
  north("70,489 70,290 71,100 77,98 76,90 66,88 64,76 71,72 70,33 795,33 797,25 830,25 845,42 1140,316 1226,397 1226,455 1234,463 1244,465") + " " +
  east("1244,415 1222,418 1208,422 1207,432 1217,448 1212,462 1205,474 1210,482 1222,486 1226,510 1223,555 1216,570 1224,580 1229,596 1244,600 1244,730 1230,735 1222,738 1213,745 990,768 667,800 665,588 674,586 672,424 217,421 217,413 170,395 168,388 113,386 112,403 98,410 82,410 78,440 60,420 32,410 10,376") + " " +
  west("700,712 668,700 640,675 605,645 590,632 572,632 578,642 550,645 528,653 508,645 480,632 474,618 485,600 480,570 470,545 460,520 438,495 340,498 328,510 315,495 275,488 240,472 205,460 165,435 150,400 148,380 135,377 120,362 100,350 72,325 82,319 80,305");

const islands = [
  west("402,754 412,760 430,757 445,768 490,786 496,794 492,800 505,815 518,824 521,834 512,838 500,832 458,830 448,818 450,788 440,776 422,774"),
  west("17,840 38,836 62,848 78,864 68,872 50,872 30,864 20,854"),
  west("396,962 410,962 416,972 440,1010 470,1038 480,1056 486,1058 492,1054 496,1066 470,1072 462,1064 442,1048 420,1018 416,996 404,976"),
  west("80,497 95,501 112,496 98,503 84,501"),
];

const brownAreas = [
  east("470,143 690,139 968,133 970,114 1244,106 1244,412 830,420 662,422 662,395 650,378 622,375 607,345 615,335 640,308 640,285 634,250 618,230 600,215 570,195 540,182 524,160 500,155 485,158"),
  east("672,425 735,424 770,460 800,490 817,522 830,490 835,460 847,452 880,495 898,508 897,570 893,600 905,583 968,583 972,600 986,640 990,680 997,735 988,748 992,762 985,769 667,800 665,588 674,586"),
  west("734,129 775,130 775,253 710,253 710,277 648,272 625,255 628,205 650,203 658,195 680,200 690,215 720,212 692,210 692,156 733,156"),
  west("287,290 320,292 360,278 372,292 410,285 416,296 372,318 383,342 320,338 300,348 262,345 265,325 287,318"),
  west("187,312 235,308 250,325 252,335 225,350 203,366"),
  west("841,200 862,199 862,222 880,225 880,205 892,203 890,230 870,240 878,262 842,268 835,245 845,238"),
  west("893,250 910,248 925,280 915,300 885,325 870,345 862,340 880,300 852,290"),
  west("722,475 760,462 800,470 860,470 880,440 940,450 930,480 890,505 880,540 850,560 820,530 815,510 770,520 760,535 750,500"),
  west("640,470 655,450 690,455 695,480 670,505 640,500"),
  west("450,358 490,356 495,380 505,400 495,430 460,420 455,380"),
  west("178,400 205,390 215,420 210,450 185,438"),
  west("892,575 940,585 985,590 1008,585 1005,605 975,615 970,640 930,655 905,625 890,600"),
  west("985,560 1008,570 1005,585 985,583"), west("970,528 990,545 985,550 972,540"),
  west("790,560 840,572 842,590 795,580"), west("875,645 905,665 930,685 910,690 885,670"),
  west("740,660 762,662 752,685 735,690"), west("502,820 514,815 516,830 505,832"),
  east("455,160 470,160 472,178 500,185 515,215 490,215 470,205 455,180"),
  east("545,225 560,240 555,250 543,240"), east("300,235 318,245 312,262 300,255"), east("652,285 674,282 672,300 650,305"),
  east("265,205 290,210 285,225 268,240"), east("250,165 270,180 268,186 255,180"), east("600,270 640,295 660,320 612,318 598,290"),
];

const boundaries = [
  ...[
    "302,127 383,345 396,380", "520,130 521,200 545,215", "592,130 592,154 733,157", "521,178 547,178 547,157 577,157 580,168 592,170",
    "628,150 628,206", "690,150 692,212 680,218", "775,130 775,315", "628,206 675,206 678,235", "648,220 648,265", "690,215 690,250 775,253", "718,212 718,252",
    "335,200 350,208 368,225 380,255 410,290", "340,160 345,155 355,162 400,165 450,182 480,180 500,200 525,215 540,232",
    "340,160 338,190 332,205", "432,285 440,265 470,238 490,235 505,200", "470,238 520,250 548,240", "495,290 505,278 545,285 570,310 590,315 600,290 640,280 655,290 655,335",
    "655,315 775,315 778,330 781,365 770,437", "495,335 550,340 620,325 655,338", "600,335 600,350 560,378", "550,378 600,385 660,412 662,430", "395,380 445,350 500,380 550,382",
    "112,315 150,290 170,266 200,262 210,272 230,270 235,290 232,305 190,310", "112,315 105,330 120,345 150,340", "135,345 165,330 190,340 200,365 187,370",
    "85,315 75,330", "150,290 155,310 185,312", "252,330 262,345", "215,380 250,370 290,372 320,352 383,345", "216,440 260,415 300,425 340,418",
    "220,465 240,440 280,430 320,460 360,440 440,455", "280,488 300,470 360,460 380,440", "370,495 380,450", "410,492 420,450", "270,400 290,375 330,390 385,380",
    "775,172 793,178 895,172", "775,278 850,278", "775,305 780,330 840,335", "805,278 805,330", "845,278 845,330 805,333", "781,340 790,355 810,362 808,368",
    "665,430 780,437 870,437", "765,575 780,590 800,610 845,650 870,655", "755,600 780,580", "830,590 870,570", "845,620 870,615 892,605", "815,655 845,652 865,660 862,700 820,735 812,765",
    "890,750 905,715 915,690", "887,750 905,755 930,720 945,705", "720,620 760,630 820,660", "740,600 725,640",
    "720,590 765,575 790,560", "850,560 870,590 890,600", "960,620 1020,640",
    "320,292 322,335", "222,310 228,345", "290,318 320,322", "360,280 365,335", "340,418 350,495", "300,425 310,480", "260,415 275,488",
  ].map(west),
  ...[
    "71,290 150,255 192,223 212,223 212,279 340,278", "335,34 335,65 320,66 321,73 340,76 340,278", "340,113 506,113 506,139 548,140 550,146 568,147 568,165 574,168 574,280 560,281 552,295 535,318 522,330 520,340 512,349 425,349 410,340 400,336 390,343 383,325 382,274 369,272 368,260 341,259",
    "329,280 332,318 340,338 360,343 385,358 396,375 403,390 403,425 410,436 405,455 380,462 362,466", "1140,316 1148,333 1150,425 1115,436 1060,437 1015,488 1000,518 965,552 940,600 910,628 890,629 830,622 748,598 745,608",
    "893,629 925,662 965,683 1012,738 1043,740 1095,790 1108,784 1122,818 1155,829", "704,610 773,612 773,672 800,672 808,690 809,733 707,734 706,760 690,762", "413,593 462,586 505,556 535,532 565,530 573,550 618,551 620,590 704,590 704,610",
    "505,556 506,583 518,586 522,625 537,628 545,655 545,705 562,712 568,740 585,755 680,755 690,770", "545,696 502,696 502,778 515,785", "300,490 310,520 260,545 230,570 200,600", "362,466 373,490 382,525 425,562 413,593 368,640 368,708",
    "218,440 225,410 255,408 270,393 290,405 312,413 338,408 347,438 350,462 330,475 290,490 262,497", "218,440 230,455 238,490 215,500 190,525 178,545 176,595 190,605", "238,490 232,505 248,523 270,510 300,488", "240,480 260,462 290,452 325,455 345,470 320,478 275,470 258,490",
    "275,452 300,448 325,452 320,462 280,462", "290,465 340,478 348,470 310,458", "220,655 280,658 300,667 368,668", "218,710 270,710 275,705 300,710 368,711 395,712 440,745 450,778 425,800 421,858", "300,667 305,685 320,703",
    "290,705 305,722 298,738 275,742 290,758 330,765 380,762 360,740 388,735 375,712", "380,762 415,778 432,768 448,775", "215,715 250,720 262,738 245,762 230,760", "245,768 270,765 280,790 270,820 300,840", "275,742 305,770 305,800 282,820",
    "125,720 140,730 135,750 160,765", "160,715 190,700 215,712 210,740 200,750", "60,640 130,635 160,640", "55,530 75,535 178,533", "55,695 120,695 125,640", "85,640 85,668 122,668", "0,675 50,678 60,690 60,740 50,795",
    "340,859 470,859 700,857 968,853 970,834 1240,827", "421,858 425,890", "460,842 520,830 560,805 580,770", "462,842 465,858", "515,785 540,775 570,768 605,775 612,800 600,835 520,838 518,815 535,802 525,790", "540,775 545,765 560,770 572,766", "560,770 558,838 598,838",
    "625,800 640,794 665,795 668,760", "625,800 628,818 660,818 690,822 692,835 708,838 708,800 690,795 688,760 675,758 678,780 690,790", "690,840 692,857", "560,812 612,812", "660,795 662,815 685,815", "523,790 523,880",
    "1185,490 1180,465 1190,450 1208,452 1217,465 1233,470", "1185,490 1190,508 1222,500 1240,512", "1222,470 1222,512",
  ].map(north),
  ...[
    "690,425 735,515 768,566 790,570 835,620 888,612 900,595", "768,566 805,548 820,530", "805,548 850,575 880,580 895,600", "847,440 875,455 920,500 980,570 968,583", "847,440 840,455",
    "835,620 845,655 860,672 820,690 800,715 802,735 832,750 990,745", "835,658 986,655", "862,662 868,750 840,752 832,755 842,782", "922,660 928,690 932,744", "860,675 870,695 925,698", "942,708 950,697 965,705 962,718 945,715",
    "868,695 868,745", "870,705 895,705 893,735 872,733 870,705", "877,685 882,740", "870,715 895,722", "888,618 903,622 898,640 878,638 888,618", "882,630 900,632", "900,765 912,758 922,770 902,776 900,765", "905,770 918,768", "900,538 913,538 910,545 900,543 900,538",
    "895,557 903,557 903,566 895,566 895,557", "851,598 858,602", "882,550 885,554", "610,335 678,333 700,350 740,372 790,380 800,395 830,418", "655,338 680,375 695,415", "638,300 678,335", "615,335 655,338", "640,285 665,280 674,285 670,305 650,310",
    "1120,350 1138,350 1135,357 1122,357 1120,350", "1244,300 1225,318 1195,365 1190,410", "1220,326 1240,328", "370,415 375,390 398,368 440,358 490,355 500,345 500,355 540,345", "463,222 463,300 500,302 510,325 540,345", "383,210 385,225 410,240 422,270 418,290 380,275 340,262",
    "418,290 453,322 462,312", "420,135 418,205 383,210 370,222 370,255 365,330 340,332 345,355 355,390 350,410 370,420", "340,332 310,305 290,300", "340,139 360,165 350,190 375,185", "217,410 250,385 280,370", "320,290 335,320 320,340", "355,140 358,160 345,170",
    "420,192 460,195 470,215 495,220", "440,200 440,218 460,222", "540,190 598,205 590,215", "470,145 475,165 455,170",
  ].map(east),
];

/* Small census tracts: jittered cells packed in wavy-edged patches.
   Each patch is [cx, cy, rx, ry, turn, cell, brown share, dark share]. */
const random = (seed) => () => {
  seed = (seed + 0x6d2b79f5) | 0;
  let t = Math.imul(seed ^ (seed >>> 15), 1 | seed);
  t = (t + Math.imul(t ^ (t >>> 7), 61 | t)) ^ t;
  return ((t ^ (t >>> 14)) >>> 0) / 4294967296;
};
const tracts = ([cx, cy, rx, ry, turn, cell, brown, dark = 0], seed) => {
  const rnd = random(seed * 97 + 11);
  const nx = Math.ceil((rx * 1.3) / cell);
  const ny = Math.ceil((ry * 1.3) / cell);
  const a = (turn * Math.PI) / 180;
  const points = [];
  for (let j = -ny; j <= ny + 1; j++) {
    const line = [];
    for (let i = -nx; i <= nx + 1; i++) {
      const x = i * cell + (rnd() - 0.5) * cell * 0.8;
      const y = j * cell + (rnd() - 0.5) * cell * 0.8;
      const angle = Math.atan2(y / ry, x / rx);
      const edge = 1 + 0.22 * Math.sin(angle * 3 + seed) + 0.16 * Math.sin(angle * 7 + seed * 2);
      line.push([
        (cx + x * Math.cos(a) - y * Math.sin(a)).toFixed(0),
        (cy + x * Math.sin(a) + y * Math.cos(a)).toFixed(0),
        Math.hypot(x / rx, y / ry) < edge,
      ]);
    }
    points.push(line);
  }
  let lines = "";
  let fills = "";
  let shade = "";
  for (let j = 0; j < points.length - 1; j++) {
    for (let i = 0; i < points[j].length - 1; i++) {
      const p = points[j][i];
      if (!p[2]) continue;
      const q = points[j][i + 1];
      const r = points[j + 1][i];
      const s = points[j + 1][i + 1];
      const cellPath = `M${p[0]} ${p[1]}L${q[0]} ${q[1]}L${s[0]} ${s[1]}L${r[0]} ${r[1]}z`;
      if (q[2] && rnd() < 0.85) lines += `M${p[0]} ${p[1]}L${q[0]} ${p[1]}L${q[0]} ${q[1]}`;
      if (r[2] && rnd() < 0.85) lines += `M${p[0]} ${p[1]}L${r[0]} ${r[1]}`;
      if (rnd() < brown) fills += cellPath;
      if (rnd() < dark) shade += cellPath;
    }
  }
  return { lines, fills, shade };
};
const clusters = [
  [590, 540, 150, 105, 35, 12, 0.03, 0.03],
  [480, 400, 110, 48, 12, 12, 0.04],
  [300, 395, 90, 30, -4, 13, 0],
  [850, 500, 130, 60, 0, 14, 0.15],
  [520, 470, 82, 44, 25, 7, 0.05, 0.25],
  [540, 530, 70, 62, 10, 6, 0.16, 0.45],
  [600, 545, 62, 52, 20, 6, 0.22, 0.45],
  [530, 600, 46, 42, 0, 7, 0.08, 0.25],
  [590, 600, 50, 40, 0, 7, 0.05, 0.25],
  [640, 490, 66, 44, 0, 8, 0.2, 0.2],
  [700, 480, 46, 44, 0, 9, 0.1, 0.12],
  [670, 600, 58, 60, 20, 7, 0.1, 0.3],
  [690, 640, 40, 46, 30, 7, 0.12, 0.3],
  [590, 440, 60, 18, 12, 9, 0, 0.1],
  [430, 400, 46, 30, 0, 7, 0.06, 0.2],
  [480, 390, 28, 36, 0, 6, 0.5, 0.3],
  [400, 450, 50, 34, 0, 15, 0],
  [765, 485, 44, 24, 0, 7, 0.4, 0.2],
  [780, 530, 60, 36, 0, 11, 0.08],
  [895, 465, 60, 34, -12, 6, 0.45, 0.3],
  [850, 520, 44, 40, 0, 10, 0.4, 0.08],
  [935, 460, 32, 26, 20, 7, 0.1, 0.2],
  [940, 545, 24, 22, 0, 6, 0.2, 0.3],
  [925, 595, 40, 44, 10, 10, 0.3, 0.05],
  [905, 665, 40, 18, 40, 9, 0.4],
  [950, 670, 34, 46, 10, 11, 0.05],
  [770, 705, 34, 56, 16, 7, 0.04, 0.15],
  [790, 690, 34, 36, 0, 10, 0],
  [990, 745, 30, 22, 10, 8, 0.05, 0.1],
  [1010, 505, 66, 36, 32, 13, 0],
  [1075, 535, 30, 20, 10, 9, 0.1, 0.1],
  [990, 500, 30, 24, 0, 9, 0.05],
  [1045, 620, 26, 18, 20, 7, 0.25, 0.2],
  [360, 375, 60, 24, 0, 9, 0],
  [455, 312, 42, 26, 0, 9, 0],
  [420, 292, 16, 8, 0, 5, 0.5],
  [185, 400, 22, 34, -20, 8, 0.5, 0.1],
  [170, 370, 28, 18, 0, 7, 0.15, 0.1],
  [238, 397, 34, 10, 0, 7, 0],
  [155, 295, 12, 12, 0, 6, 0],
  [282, 330, 12, 9, 0, 5, 0.3],
  [575, 205, 44, 30, 0, 10, 0.05],
  [600, 183, 18, 10, 0, 5, 0.5, 0.2],
  [618, 248, 26, 13, 0, 5, 0.5, 0.3],
  [655, 205, 24, 16, 0, 9, 0.3],
  [533, 183, 12, 12, 0, 6, 0],
  [900, 300, 26, 44, 10, 9, 0.35],
  [945, 275, 26, 50, 0, 15, 0],
  [915, 345, 34, 20, 20, 9, 0],
  [905, 425, 40, 18, 20, 8, 0, 0.05],
  [940, 395, 26, 20, 0, 12, 0],
  [1025, 103, 26, 9, 0, 7, 0, 0.1],
  [1085, 400, 24, 9, 0, 6, 0, 0.1],
  [1228, 538, 14, 12, 0, 5, 0.4, 0.2],
  [1235, 595, 28, 18, 40, 7, 0.1, 0.2],
  [1290, 645, 40, 26, 25, 8, 0.15, 0.12],
  [1335, 655, 26, 16, 20, 6, 0.4, 0.3],
  [1250, 430, 14, 12, 0, 9, 0],
  [1603, 1075, 10, 20, 0, 6, 0, 0.3],
  [510, 824, 6, 7, 0, 4, 0.6, 0.3],
].map(tracts);

const MapView = () => (
  <svg viewBox="237 135 714 883" preserveAspectRatio="xMinYMid slice" role="img" aria-label="Map canvas">
    <defs>
      <clipPath id="land"><polygon points={land} />{islands.map((p) => <polygon key={p} points={p} />)}</clipPath>
    </defs>
    <g transform="translate(300 440) scale(.333333)" fill="none" stroke={c.ink} strokeWidth="3" strokeLinejoin="round">
      <g fill={c.purple}>
        <polygon points={land} />
        {islands.map((p) => <polygon key={p} points={p} />)}
      </g>
      <g fill={c.brown}>{brownAreas.map((p) => <polygon key={p} points={p} />)}</g>
      <g clipPath="url(#land)">
        {boundaries.map((p) => <polyline key={p} points={p} />)}
        {clusters.map((k, i) => <path key={i} d={k.fills} fill={c.brown} stroke="none" />)}
        {clusters.map((k, i) => <path key={i} d={k.shade} fill="#2f2926" fillOpacity=".7" stroke="none" />)}
        {clusters.map((k, i) => <path key={i} d={k.lines} strokeWidth="2.500" />)}
      </g>
      <polygon points={land} />
    </g>
  </svg>
);

/* ---------- data ---------- */
const menus = ["Pro_ject", "_Edit", "_View", "_Layer", "_Settings", "_Plugins", "Vect_or", "_Raster", "_Database", "_Web", "Pro_cessing", "_Help"];

/* "|" starts a group, "-" dims an icon, "+" adds a drop-down arrow, "=" is pressed */
const bar1 = "| new open save saveas layout manager style | =hand panSel zoomIn zoomOut -native zoomFull zoomSel zoomLayer zoomLast -zoomNext view bookmarkNew bookmark refresh | identify -+action +select +form deselect table".split(" ");
const bar2 = "| dsm gpkg shp feather memory | -edits pencil -saveEdits -addFeature -+vertex -modify -trash -cut -copy -paste -undo -redo | tag diagram pinOn -pin -tagEye -tagMove -tagTurn -tagEdit | globeAdd".split(" ");
const bar3 = "| search osm".split(" ");
const tableBar = "pencil -modify -saveEdits refresh | -addRow -trash -cut copy -paste | selExpr selAll invert deselect filter moveTop panSel zoomSel | -newField -delField calc | cond | dock tableAct".split(" ");

const browser = [
  ["Favorites", "star"], ["Project Home", "projHome", "closed"], ["Home", "home", "closed"], ["/", "folder", "closed"],
  ["GeoPackage", "gpkgPlain", "closed"], ["SpatiaLite", "featherPlain", "closed"], ["PostGIS", "postgis"], ["MSSQL", "mssql"],
  ["DB2", "db2"], ["WMS/WMTS", "wms"], ["XYZ Tiles", "wms", "open"], ["google maps", "tiles", "child"],
  ["google satellite", "tiles", "child"], ["OpenStreetMap", "tiles", "child"], ["WCS", "wcs"], ["WFS", "wfs"], ["OWS", "ows"],
  ["ArcGisMapServer", "arcMap"], ["ArcGisFeatureServer", "arcFeat"], ["GeoNode", "geonode"],
];
const layers = [
  { name: "tract_boundary_scag_…", color: c.purple, off: true },
  { name: "majHISP", color: "#75645b", selected: true },
  { name: "joined", color: c.purple },
];

const columns = ["Y_CENTER", "ACRES", "Shape_area", "Shape_len", "unty_CountyNar", "pctHISP", "pctNHBLK", "majHISP", "majNHBLK"];
const rows = `213 3749391.685… 389.69801135 1577058.216… 7234.621406… 0.155 0.814 0 1
214 3749524.345… 3.11005860 12586.01120… 475.1586850… 0.000 0.000 0 0
215 3746466.791… 397.68811057 1609393.121… 5090.177008… 0.064 0.871 0 1
216 3744500.126… 1112.451397… 4501949.096… 12793.07166… 0.323 0.202 0 0
217 3747880.342… 1050.636875… 4251793.584… 9179.342164… 0.138 0.614 0 1
218 3746517.596… 485.10931870 1963175.639… 5587.268658… 0.096 0.760 0 1
219 3746933.044… 766.98532627 3103891.905… 8246.318205… 0.562 0.172 1 0
220 3744825.233… 551.85392764 2233282.522… 8493.699738… 0.323 0.079 0 0
221 3743118.506… 160.49689024 649510.4693… 3323.770073… 0.372 0.058 0 0
222 3741636.187… 649.06933314 2626700.878… 6883.921238… 0.346 0.053 0 0
223 3743104.899… 156.95509893 635177.3034… 3403.621111… 0.500 0.016 0 0
224 3742209.449… 324.91091246 1314873.079… 4599.966747… 0.520 0.047 1 0
225 3741095.780… 255.81435618 1035248.133… 4141.419665… 0.577 0.050 1 0
226 3745262.555… 543.86917479 2200969.258… 6840.553253… 0.454 0.048 0 0
227 3743959.859… 334.90203288 1355305.875… 4986.567677… 0.331 0.082 0 0
228 3743896.773… 334.85023372 1355096.231… 6560.878990… 0.431 0.050 0 0
229 3742480.580… 677.41004649 2741392.163… 7378.229022… 0.763 0.097 1 0
230 3745093.875… 460.60561644 1864012.266… 5971.274293… 0.692 0.073 1 0
231 3743867.296… 165.26102439 668790.3201… 3314.811456… 0.622 0.045 1 0
232 3743412.987… 6.37737049 25808.40820… 697.1909651… 0.714 0.048 1 0
233 3741814.326… 1724.371939… 6978313.577… 11540.76910… 0.000 0.000 0 0
234 3745326.325… 733.39965585 2967974.944… 9192.214052… 0.000 0.000 0 0
235 3749326.638… 584.40631128 2365017.882… 6091.911586… 0.099 0.049 0 0
236 3748991.554… 946.67960595 3831091.792… 8074.111315… 0.093 0.066 0 0
237 3749764.911… 140.02068699 566645.8806… 3199.617768… 0.088 0.095 0 0
238 3748712.686… 372.08661604 1505787.146… 6628.618596… 0.140 0.100 0 0
239 3746277.103… 298.59128960 1208360.920… 4983.516616… 0.160 0.060 0 0
240 3746626.026… 359.05287475 1453041.251… 6560.272086… 0.121 0.062 0 0
241 3747393.083… 326.24544181 1320273.780… 4842.269702… 0.096 0.040 0 0
242 3747989.405… 446.33604419 1806265.106… 6489.807051… 0.091 0.062 0 0
243 3746392.814… 428.46078924 1733926.224… 5972.286142… 0.090 0.042 0 0
244 3748494.747… 1221.145601… 4941820.718… 11778.96233… 0.169 0.094 0 0`.split("\n").map((line) => line.split(" "));

/* ---------- composed parts ---------- */
const MenuLabel = ({ text }) => {
  const at = text.indexOf("_");
  return <MenuItem type="button">{text.slice(0, at)}<u>{text[at + 1]}</u>{text.slice(at + 2)}</MenuItem>;
};
const ToolItems = ({ items }) =>
  items.map((item, i) => {
    if (item === "|") return <Handle key={i} $first={i === 0} />;
    const name = item.replace(/[-+=]/g, "");
    const disabled = item.startsWith("-");
    return (
      <React.Fragment key={i}>
        <ToolButton type="button" aria-label={name} disabled={disabled} $pressed={item.startsWith("=")}>
          <Icon name={name} />
        </ToolButton>
        {item.includes("+") && <ArrowButton type="button" aria-label={`${name} options`} disabled={disabled}><Down /></ArrowButton>}
      </React.Fragment>
    );
  });
const DockHeader = ({ title }) => (
  <DockTitle>
    <h2>{title}</h2>
    <DockButton type="button" aria-label={`Float ${title}`}>
      <svg width="11" height="11" viewBox="0 0 11 11" fill="none" stroke="#6b6966"><rect x=".5" y=".5" width="10" height="10" rx="2" /><path d="M2.500 4.500h4v4h-4zM4.500 4V2.500h4v4H7" /></svg>
    </DockButton>
    <DockButton type="button" aria-label={`Close ${title}`}>
      <svg width="11" height="11" viewBox="0 0 11 11" fill="none" stroke="#6b6966"><rect x=".5" y=".5" width="10" height="10" rx="2" /><path d="M3 3l5 5M8 3L3 8" strokeWidth="2" /></svg>
    </DockButton>
  </DockTitle>
);
const Spin = ({ label }) => (
  <FieldSide $width={13}>
    <SpinButton type="button" $up aria-label={`${label} up`} />
    <SpinButton type="button" aria-label={`${label} down`} />
  </FieldSide>
);
const Tri = ({ d }) => <svg width="8" height="8" viewBox="0 0 8 8"><path d={d} fill="#555" /></svg>;

export default function App() {
  return (
    <Desktop>
      <Global />
      <MainWindow>
        <MenuBar>{menus.map((m) => <MenuLabel key={m} text={m} />)}</MenuBar>
        <Toolbar><ToolItems items={bar1} /></Toolbar>
        <Toolbar><ToolItems items={bar2} /><Overflow>»</Overflow></Toolbar>
        <Toolbar $height={38}><ToolItems items={bar3} /></Toolbar>
        <Body>
          <Sidebar>
            <Dock>
              <DockHeader title="Browser" />
              <DockTools>
                {["addLayer", "refresh", "filter", "treeUp", "info"].map((n) => (
                  <SmallButton key={n} type="button" aria-label={n}><Icon name={n} size={16} /></SmallButton>
                ))}
              </DockTools>
              <Tree>
                {browser.map(([name, icon, kind]) => (
                  <TreeRow key={name} $child={kind === "child"}>
                    {kind !== "child" && (
                      <Twist>
                        {kind === "closed" && <svg width="6" height="9"><path d="M0 0l5 4.500L0 9z" fill="#444" /></svg>}
                        {kind === "open" && <svg width="9" height="6"><path d="M0 0h9L4.500 5z" fill="#444" /></svg>}
                      </Twist>
                    )}
                    <Icon name={icon} size={16} />
                    <NodeName>{name}</NodeName>
                  </TreeRow>
                ))}
              </Tree>
            </Dock>
            <SplitH />
            <Dock>
              <DockHeader title="Layers" />
              <DockTools>
                {["brush", "group", "eye", "filter", "epsilon", "+", "treeDown", "treeUp", "remove"].map((n) =>
                  n === "+"
                    ? <ArrowButton key={n} type="button" aria-label="Filter by expression options"><Down /></ArrowButton>
                    : <SmallButton key={n} type="button" aria-label={n}><Icon name={n} size={16} /></SmallButton>
                )}
              </DockTools>
              <Tree>
                <TreeRow><Twist /><Icon name="sheet" size={16} /><LayerName>county</LayerName></TreeRow>
                {layers.map((l) => (
                  <TreeRow key={l.name} $selected={l.selected}>
                    <Twist />
                    <Check id={`layer-${l.name}`} defaultChecked={!l.off} />
                    <Swatch $color={l.color} />
                    <LayerName as="label" htmlFor={`layer-${l.name}`} $off={l.off} $selected={l.selected}>{l.name}</LayerName>
                  </TreeRow>
                ))}
              </Tree>
            </Dock>
          </Sidebar>
          <SplitV />
          <Canvas><MapView /></Canvas>
        </Body>
        <StatusBar>
          <Field $width={248} $after={32}>
            <StatusIcon as="span" $width={24}><Icon name="find" size={14} /></StatusIcon>
            <FieldInput $large aria-label="Locate" placeholder="Type to locate (Ctrl+K)" />
          </Field>
          <Caption $width={47} htmlFor="coordinate">Coordinate</Caption>
          <Field $width={95}><FieldInput $center id="coordinate" defaultValue="212210,3622178" /></Field>
          <StatusIcon type="button" aria-label="Toggle extents" $width={32}><Icon name="extents" size={16} /></StatusIcon>
          <Caption $width={25} htmlFor="scale">Scale</Caption>
          <Field $width={95}>
            <Picker id="scale" defaultValue="a"><option value="a">1:2684677</option></Picker>
            <FieldSide $width={19}><Down /></FieldSide>
          </Field>
          <StatusIcon type="button" aria-label="Lock scale" $width={33}><Icon name="lock" size={16} /></StatusIcon>
          <Caption $width={41} htmlFor="magnifier">Magnifier</Caption>
          <Field $width={94} $after={8}><FieldInput id="magnifier" defaultValue="100%" /><Spin label="Magnifier" /></Field>
          <Caption $width={44} htmlFor="rotation">Rotation</Caption>
          <Field $width={90} $after={8}><FieldInput id="rotation" defaultValue="0.0 °" /><Spin label="Rotation" /></Field>
          <RenderToggle><Check id="render" defaultChecked /><label htmlFor="render">Render</label></RenderToggle>
        </StatusBar>
      </MainWindow>

      <TableWindow>
        <TableTools>
          {tableBar.map((item, i) => {
            if (item === "|") return <Divider key={i} />;
            const name = item.replace("-", "");
            return <SmallButton key={i} type="button" aria-label={name} disabled={item !== name}><Icon name={name} size={16} /></SmallButton>;
          })}
        </TableTools>
        <TableArea>
          <TableScroll>
            <TableClip>
              <Grid>
                <thead>
                  <tr>
                    <HeadCell $corner aria-label="Row" />
                    {columns.map((n) => <HeadCell key={n} scope="col">{n}</HeadCell>)}
                  </tr>
                </thead>
                <tbody>
                  {rows.map(([id, y, acres, area, len, hisp, blk, majH, majB], i) => (
                    <Row key={id} $alt={i % 2 === 1} $selected={majH === "1"}>
                      <RowHead scope="row">{id}</RowHead>
                      <Cell>{y}</Cell><Cell>{acres}</Cell><Cell>{area}</Cell><Cell>{len}</Cell>
                      <Cell $text>Los Angeles</Cell>
                      <Cell>{hisp}</Cell><Cell>{blk}</Cell><Cell>{majH}</Cell><Cell>{majB}</Cell>
                    </Row>
                  ))}
                </tbody>
              </Grid>
            </TableClip>
            <HBar>
              <BarButton type="button" aria-label="Scroll left"><Tri d="M6 0v8L2 4z" /></BarButton>
              <Gap $share={690} /><Thumb $across $share={222} />
              <BarButton type="button" aria-label="Scroll right"><Tri d="M2 0v8l4-4z" /></BarButton>
            </HBar>
          </TableScroll>
          <VBar>
            <BarButton $wide type="button" aria-label="Scroll up"><Tri d="M0 6h8L4 2z" /></BarButton>
            <Gap $share={37} /><Thumb $share={28} /><Gap $share={885} />
            <BarButton $wide type="button" aria-label="Scroll down"><Tri d="M0 2h8L4 6z" /></BarButton>
          </VBar>
        </TableArea>
        <TableFoot>
          <FilterButton type="button"><Icon name="filter" size={14} />Show All Features<Down /></FilterButton>
          <FootViews>
            <SmallButton type="button" aria-label="Form view"><Icon name="formView" size={14} /></SmallButton>
            <SmallButton type="button" aria-label="Table view" $pressed><Icon name="table" size={14} /></SmallButton>
          </FootViews>
        </TableFoot>
      </TableWindow>
    </Desktop>
  );
}
